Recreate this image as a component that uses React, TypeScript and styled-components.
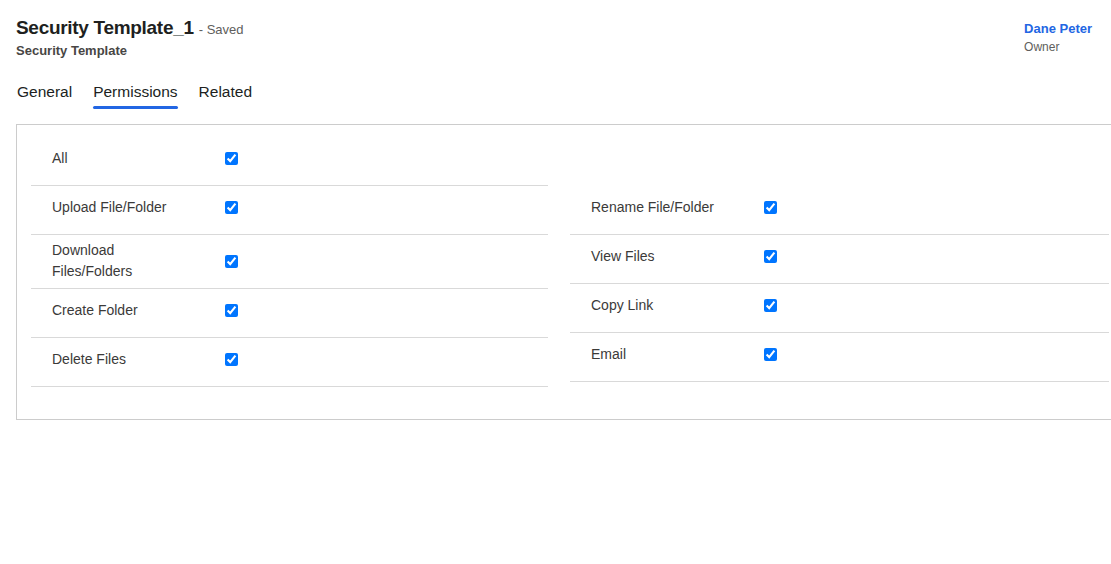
import React from "react";
import styled, { createGlobalStyle } from "styled-components";

const GlobalStyle = createGlobalStyle`
  html, body { margin: 0; padding: 0; background: #ffffff; overflow: hidden; }
  body { font-family: "Segoe UI", "Liberation Sans", Arial, sans-serif; color: #323130; }
`;

const Page = styled.div`
  width: 1111px;
  height: 564px;
  overflow: hidden;
  box-sizing: border-box;
  padding: 14px 0 0 16px;
`;

const Header = styled.div`
  display: flex;
  justify-content: space-between;
  align-items: flex-start;
  padding-right: 19px;
`;

const TitleBlock = styled.div`
  display: flex;
  flex-direction: column;
`;

const TitleLine = styled.div`
  display: flex;
  align-items: baseline;
  gap: 5px;
`;

const Title = styled.h1`
  margin: 0;
  font-size: 19px;
  font-weight: 600;
  line-height: 28px;
  color: #201f1e;
  letter-spacing: -0.3px;
`;

const Saved = styled.span`
  font-size: 13px;
  color: #605e5c;
`;

const Subtitle = styled.div`
  font-size: 13px;
  font-weight: 700;
  color: #484644;
  line-height: 18px;
`;

const OwnerBlock = styled.div`
  display: flex;
  flex-direction: column;
  align-items: flex-start;
  padding-top: 6px;
`;

const OwnerName = styled.a`
  font-size: 13px;
  font-weight: 700;
  color: #2266e3;
  line-height: 18px;
  text-decoration: none;
`;

const OwnerRole = styled.span`
  font-size: 12px;
  color: #605e5c;
  line-height: 18px;
`;

const Tabs = styled.div`
  display: flex;
  gap: 21px;
  margin-top: 21px;
  padding-left: 1px;
`;

const Tab = styled.div<{ $active?: boolean }>`
  position: relative;
  font-size: 15.5px;
  line-height: 22px;
  color: #201f1e;
  padding-bottom: 6px;
  font-weight: 400;
  &::after {
    content: "";
    display: ${(p) => (p.$active ? "block" : "none")};
    position: absolute;
    left: 0;
    right: 0;
    bottom: 0;
    height: 3px;
    border-radius: 2px;
    background: #2266e3;
  }
`;

const Panel = styled.div`
  margin-top: 15px;
  width: 1110px;
  box-sizing: border-box;
  border: 1px solid #cccccc;
  padding: 12px 0 32px 14px;
`;

const FullRow = styled.div`
  width: 517px;
`;

const Columns = styled.div`
  display: grid;
  grid-template-columns: 517px 539px;
  column-gap: 22px;
  align-items: start;
`;

const Column = styled.div`
  display: flex;
  flex-direction: column;
`;

const Row = styled.div`
  box-sizing: border-box;
  min-height: 49px;
  padding: 5px 0 6px 21px;
  border-bottom: 1px solid #d9d9d9;
  display: flex;
  align-items: flex-start;
`;

const RowInner = styled.div`
  display: flex;
  align-items: center;
  min-height: 32px;
`;

const Label = styled.div`
  width: 136px;
  font-size: 14px;
  line-height: 21px;
  color: #3b3a39;
`;

const Control = styled.div`
  padding-left: 37px;
  display: flex;
  align-items: center;
`;

const Check = styled.input`
  width: 13px;
  height: 13px;
  margin: 0;
  accent-color: #0075ff;
`;

const PermRow = ({ label }: { label: string }) => (
  <Row>
    <RowInner>
      <Label>{label}</Label>
      <Control>
        <Check type="checkbox" defaultChecked />
      </Control>
    </RowInner>
  </Row>
);

const left = ["Upload File/Folder", "Download Files/Folders", "Create Folder", "Delete Files"];
const right = ["Rename File/Folder", "View Files", "Copy Link", "Email"];

export default function App() {
  return (
    <>
      <GlobalStyle />
      <Page>
        <Header>
          <TitleBlock>
            <TitleLine>
              <Title>Security Template_1</Title>
              <Saved>- Saved</Saved>
            </TitleLine>
            <Subtitle>Security Template</Subtitle>
          </TitleBlock>
          <OwnerBlock>
            <OwnerName href="#">Dane Peter</OwnerName>
            <OwnerRole>Owner</OwnerRole>
          </OwnerBlock>
        </Header>
        <Tabs>
          <Tab>General</Tab>
          <Tab $active>Permissions</Tab>
          <Tab>Related</Tab>
        </Tabs>
        <Panel>
          <FullRow>
            <PermRow label="All" />
          </FullRow>
          <Columns>
            <Column>
              {left.map((l) => (
                <PermRow key={l} label={l} />
              ))}
            </Column>
            <Column>
              {right.map((l) => (
                <PermRow key={l} label={l} />
              ))}
            </Column>
          </Columns>
        </Panel>
      </Page>
    </>
  );
}
